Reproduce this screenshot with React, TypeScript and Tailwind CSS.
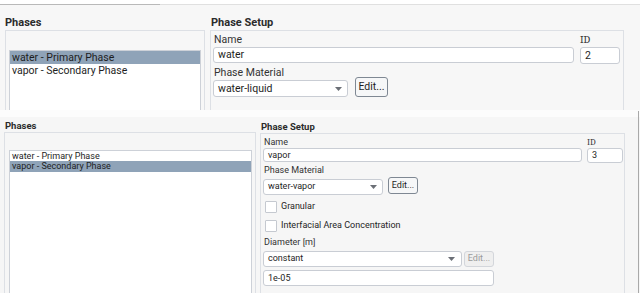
import React from 'react';

const font = { fontFamily: 'Roboto, "Liberation Sans", sans-serif' };

function Arrow({ className = '' }: { className?: string }) {
  return (
    <svg width="7" height="4" viewBox="0 0 7 4" className={className}>
      <path d="M0 0 L7 0 L3.5 4 Z" fill="#6b6f76" />
    </svg>
  );
}

function TopShot() {
  return (
    <div className="h-[110px] overflow-hidden bg-[#f7f7f7] text-[#1e1e1e]">
      <div className="h-[4px] bg-white" />
      <div className="flex h-px">
        <div className="w-[160px] bg-[#b9b9b9]" />
        <div className="flex-1 bg-[#e0e0e0]" />
      </div>
      <div className="flex pl-[5px] gap-[5px]">
        {/* Phases */}
        <div className="w-[200px]">
          <div className="h-[25px] pt-[11px] text-[11px] font-bold leading-[14px] text-[#2b2b2b]">Phases</div>
          <div className="h-[100px] border border-[#dde0e5] pt-[19px] pl-[3px] pr-[3px]">
            <div className="h-[100px] bg-white border border-[#cdd1d8] text-[10.5px] leading-[13px]">
              <div className="h-[13px] bg-[#8fa3b8] pl-[2px]">water - Primary Phase</div>
              <div className="h-[13px] pl-[2px]">vapor - Secondary Phase</div>
            </div>
          </div>
        </div>
        {/* Phase Setup */}
        <div className="w-[414px]">
          <div className="h-[25px] pt-[11px] pl-[1px] text-[11px] font-bold leading-[14px] text-[#2b2b2b]">Phase Setup</div>
          <div className="h-[100px] border border-[#dde0e5] pl-[2px]">
            <div className="flex gap-[6px]">
              <div className="w-[361px]">
                <div className="mt-[2px] h-[14px] pl-[1px] text-[10.5px] leading-[14px] text-[#333]">Name</div>
                <div className="h-[16px] rounded-[3px] border border-[#c9cdd4] bg-white pl-[4px] text-[10.5px] leading-[14px]">water</div>
              </div>
              <div className="w-[40px]">
                <div className="mt-[2px] h-[14px] text-[10.5px] leading-[14px] text-[#333] font-serif">ID</div>
                <div className="h-[17px] rounded-[3px] border border-[#c9cdd4] bg-white pl-[4px] text-[10.5px] leading-[15px]">2</div>
              </div>
            </div>
            <div className="mt-[2px] h-[14px] pl-[1px] text-[10.5px] leading-[14px] text-[#333]">Phase Material</div>
            <div className="flex items-end gap-[7px] -mt-[3px]">
              <div className="flex h-[17px] w-[135px] items-center justify-between rounded-[3px] border border-[#c9cdd4] bg-white pl-[4px] pr-[5px] text-[10.5px]">
                <span>water-liquid</span>
                <Arrow />
              </div>
              <div className="flex h-[20px] w-[33px] items-center justify-center rounded-[3px] border border-[#7f8893] bg-[#f6f7f8] text-[10.5px]">Edit...</div>
            </div>
          </div>
        </div>
      </div>
    </div>
  );
}

function BottomShot() {
  return (
    <div className="relative h-[183px] overflow-hidden bg-[#f6f6f6] text-[#1e1e1e]">
      <div className="absolute right-[1px] top-[1px] h-full w-px bg-[#a9a9a9]" />
      <div className="h-[7px] bg-[#fcfcfc]" />
      <div className="flex pl-[4px] gap-[4px]">
        {/* Phases */}
        <div className="w-[252px]">
          <div className="h-[15px] pt-[3px] pl-[1px] text-[9.5px] font-bold leading-[12px] text-[#2b2b2b]">Phases</div>
          <div className="h-[200px] border border-[#dde0e5] pt-[17px] pl-[4px] pr-[3px]">
            <div className="h-[200px] bg-white border border-[#cdd1d8] text-[9px] leading-[11px]">
              <div className="h-[10px] pl-[2px]">water - Primary Phase</div>
              <div className="h-[11px] bg-[#8fa3b8] pl-[2px]">vapor - Secondary Phase</div>
            </div>
          </div>
        </div>
        {/* Phase Setup */}
        <div className="w-[365px]">
          <div className="h-[16px] pt-[4px] pl-[1px] text-[9.5px] font-bold leading-[12px] text-[#2b2b2b]">Phase Setup</div>
          <div className="h-[200px] border border-[#dde0e5] pl-[2px]">
            <div className="flex gap-[5px]">
              <div className="w-[319px]">
                <div className="mt-[2px] h-[12px] pl-[1px] text-[9px] leading-[12px] text-[#333]">Name</div>
                <div className="h-[14px] rounded-[3px] border border-[#c9cdd4] bg-white pl-[4px] text-[9px] leading-[12px]">vapor</div>
              </div>
              <div className="w-[36px]">
                <div className="mt-[3px] h-[11px] text-[9px] leading-[11px] text-[#333] font-serif">ID</div>
                <div className="h-[15px] rounded-[3px] border border-[#c9cdd4] bg-white pl-[4px] text-[9px] leading-[13px]">3</div>
              </div>
            </div>
            <div className="mt-[1px] h-[13px] pl-[1px] text-[9px] leading-[13px] text-[#333]">Phase Material</div>
            <div className="flex items-start gap-[5px]">
              <div className="mt-[2px] flex h-[16px] w-[120px] items-center justify-between rounded-[3px] border border-[#c9cdd4] bg-white pl-[4px] pr-[5px] text-[9px]">
                <span>water-vapor</span>
                <Arrow />
              </div>
              <div className="flex h-[17px] w-[30px] items-center justify-center rounded-[3px] border border-[#7f8893] bg-[#f6f7f8] text-[9px]">Edit...</div>
            </div>
            <div className="mt-[4px] flex h-[16px] items-center gap-[4px] pl-[2px] text-[9px]">
              <div className="h-[12px] w-[12px] rounded-[1px] border border-[#c5c9d0] bg-white" />
              <span>Granular</span>
            </div>
            <div className="mt-[3px] flex h-[16px] items-center gap-[4px] pl-[2px] text-[9px]">
              <div className="h-[12px] w-[12px] rounded-[1px] border border-[#c5c9d0] bg-white" />
              <span>Interfacial Area Concentration</span>
            </div>
            <div className="mt-[2px] h-[13px] pl-[1px] text-[9px] leading-[13px] text-[#333]">Diameter [m]</div>
            <div className="mt-[2px] flex gap-[2px]">
              <div className="flex h-[16px] w-[199px] items-center justify-between rounded-[3px] border border-[#c9cdd4] bg-white pl-[4px] pr-[6px] text-[9px]">
                <span>constant</span>
                <Arrow />
              </div>
              <div className="flex h-[16px] w-[30px] items-center justify-center rounded-[3px] border border-[#d3d6db] bg-[#efefef] text-[9px] text-[#9a9a9a]">Edit...</div>
            </div>
            <div className="mt-[3px] h-[16px] w-[231px] rounded-[3px] border border-[#c9cdd4] bg-white pl-[4px] text-[9px] leading-[14px]">1e-05</div>
          </div>
        </div>
      </div>
    </div>
  );
}

export default function App() {
  return (
    <div className="w-[640px] h-[293px] overflow-hidden bg-white" style={font}>
      <TopShot />
      <BottomShot />
    </div>
  );
}
